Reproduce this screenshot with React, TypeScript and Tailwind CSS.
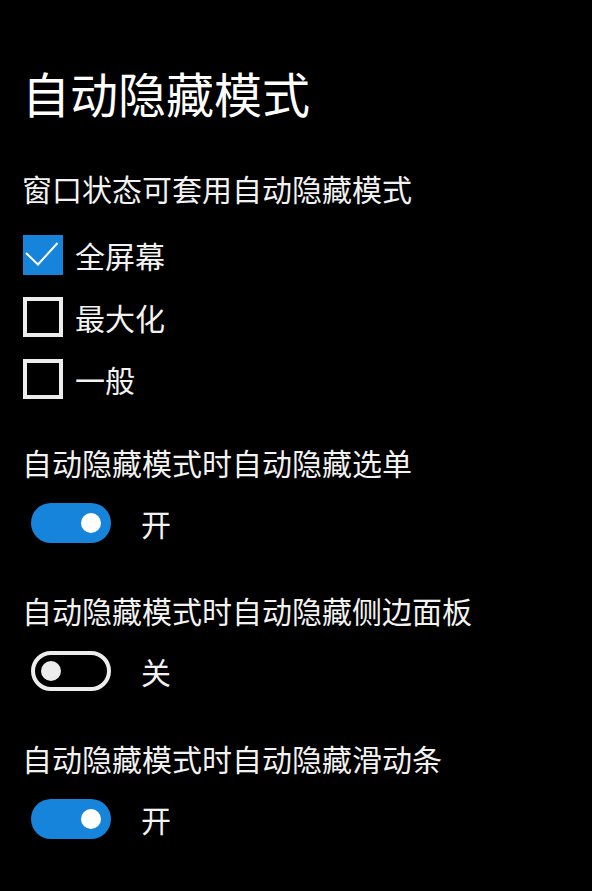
import React from "react";

const font = { fontFamily: '"Noto Sans CJK SC", "Noto Sans", sans-serif' };

const Check = ({ checked, label }: { checked?: boolean; label: string }) => (
  <div className="flex items-center h-[40px]">
    {checked ? (
      <div className="w-[40px] h-[40px] bg-[#1784dc] flex items-center justify-center">
        <svg width="40" height="40" viewBox="0 0 40 40">
          <path d="M3 18 L15 29.5 L34.5 8" fill="none" stroke="#fff" strokeWidth="2" />
        </svg>
      </div>
    ) : (
      <div className="w-[40px] h-[40px] border-[4px] border-[#ededed]" />
    )}
    <span className="ml-[12px] text-[30px] leading-none text-[#f2f2f2]">{label}</span>
  </div>
);

const Toggle = ({ on }: { on?: boolean }) => (
  <div className="flex items-center ml-[9px] h-[40px]">
    {on ? (
      <div className="w-[80px] h-[40px] rounded-full bg-[#1784dc] flex items-center justify-end pr-[10px]">
        <div className="w-[20px] h-[20px] rounded-full bg-white" />
      </div>
    ) : (
      <div className="w-[80px] h-[40px] rounded-full border-[4px] border-[#ededed] flex items-center pl-[6px]">
        <div className="w-[20px] h-[20px] rounded-full bg-[#ededed]" />
      </div>
    )}
    <span className="ml-[30px] text-[30px] leading-none text-[#f2f2f2]">{on ? "开" : "关"}</span>
  </div>
);

const Section = ({ title, on }: { title: string; on?: boolean }) => (
  <div className="flex flex-col gap-[21px]">
    <div className="text-[30px] leading-[40px] text-[#f2f2f2]">{title}</div>
    <Toggle on={on} />
  </div>
);

export default function App() {
  return (
    <div className="w-[592px] h-[891px] bg-black pl-[22px] pt-[62px] overflow-hidden flex flex-col" style={font}>
      <h1 className="text-[48px] leading-[60px] text-white">自动隐藏模式</h1>
      <div className="mt-[46px] text-[30px] leading-[40px] text-[#f2f2f2]">窗口状态可套用自动隐藏模式</div>
      <div className="mt-[27px] pl-[1px] flex flex-col gap-[22px]">
        <Check checked label="全屏幕" />
        <Check label="最大化" />
        <Check label="一般" />
      </div>
      <div className="mt-[43px] flex flex-col gap-[47px]">
        <Section title="自动隐藏模式时自动隐藏选单" on />
        <Section title="自动隐藏模式时自动隐藏侧边面板" />
        <Section title="自动隐藏模式时自动隐藏滑动条" on />
      </div>
    </div>
  );
}
